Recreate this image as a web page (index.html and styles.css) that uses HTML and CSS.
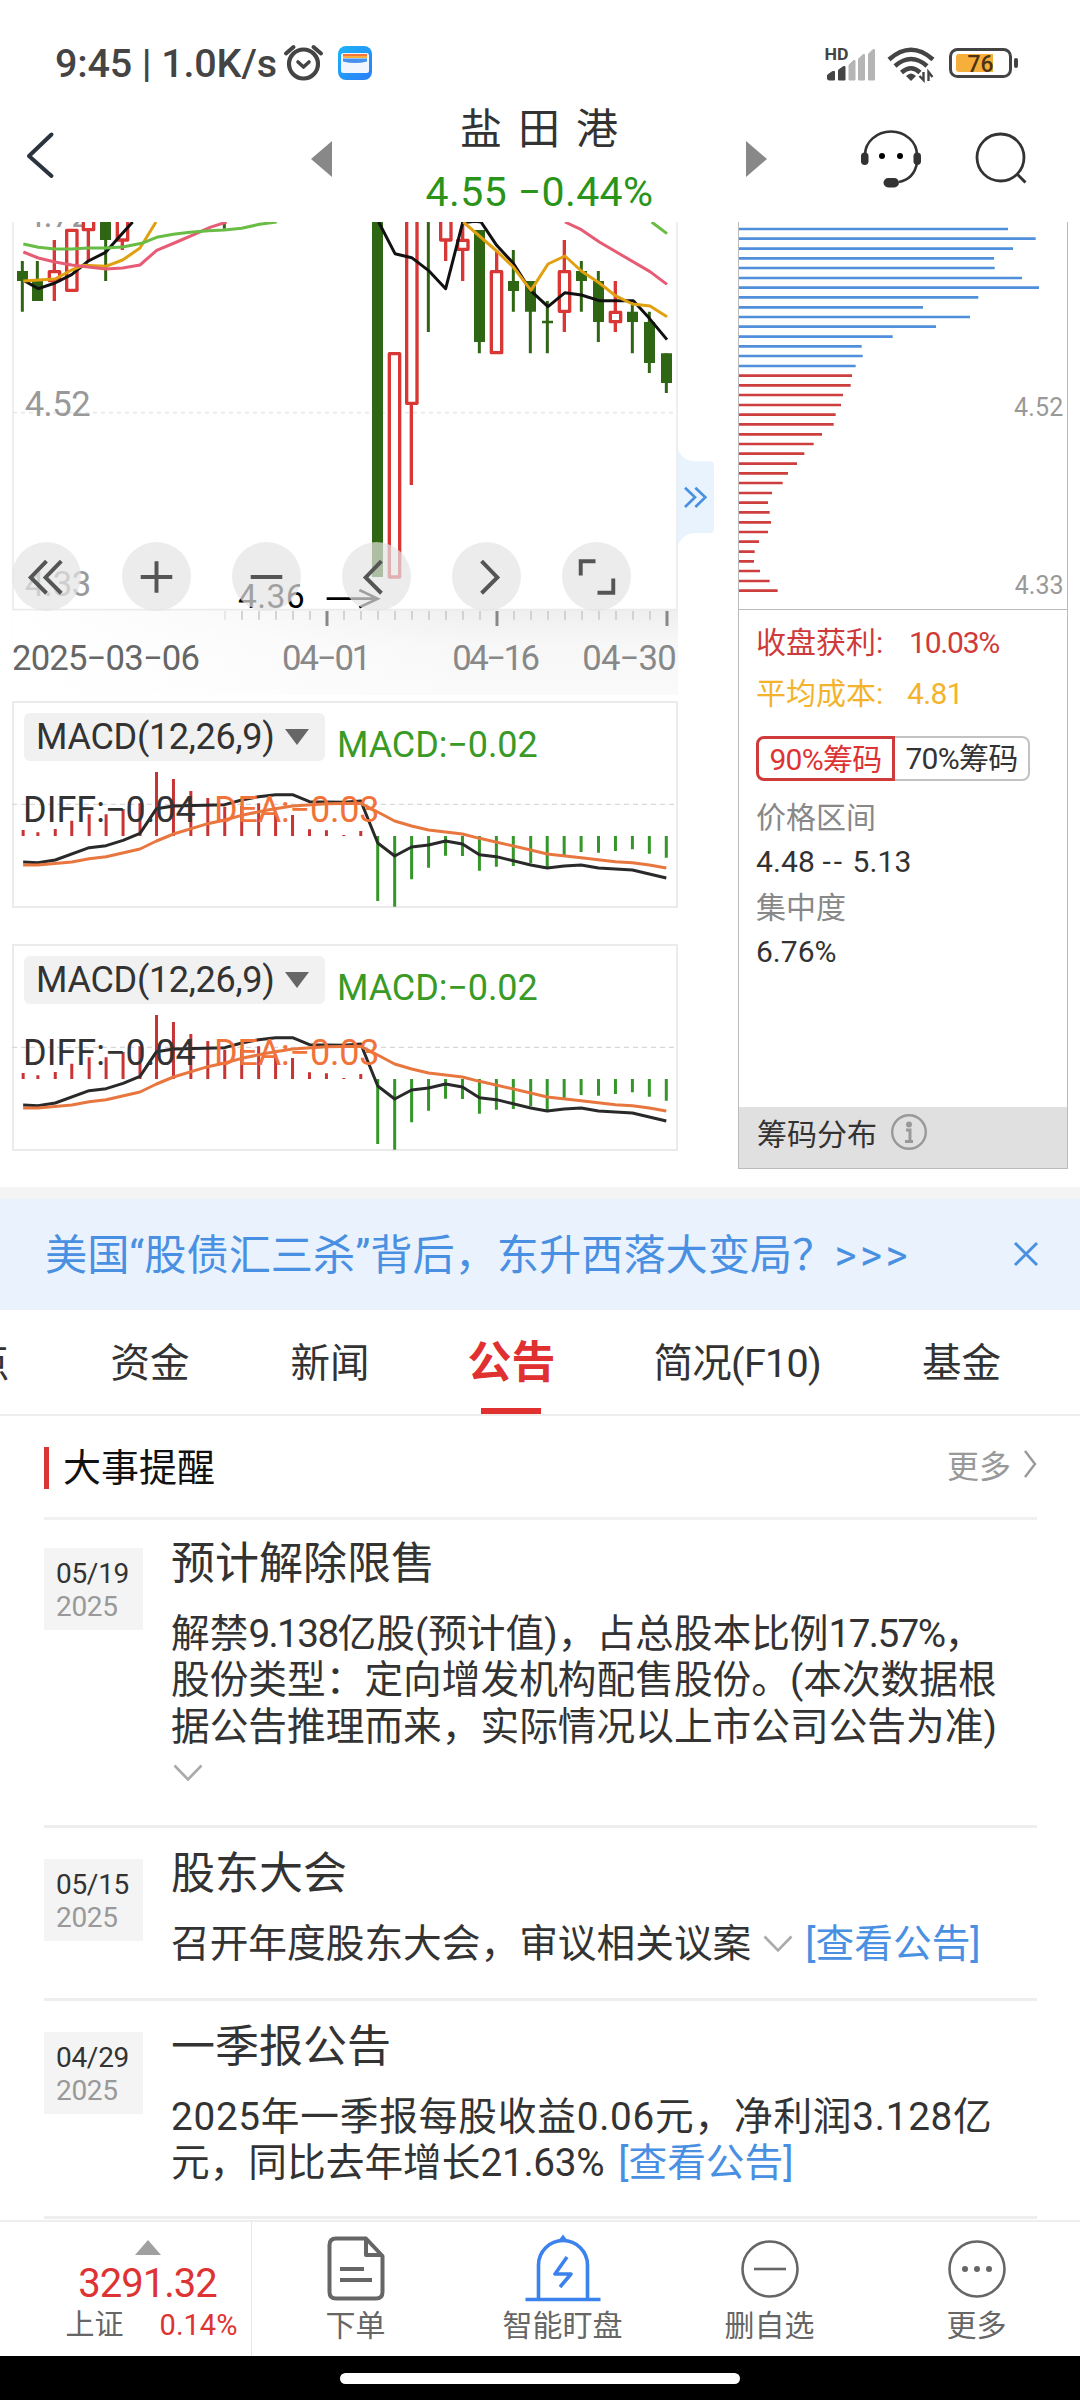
FILE: index.html
```
<!DOCTYPE html>
<html lang="zh-CN">
<head>
<meta charset="utf-8">
<title>盐田港</title>
<link rel="stylesheet" href="styles.css">
</head>
<body>
<header class="status">
  <span class="status-text">9:45 | 1.0K/s</span>
  <svg class="status-left" width="90" height="40" viewBox="283 43 90 40">
    <g fill="none" stroke="#444" stroke-linecap="round" stroke-linejoin="round">
      <circle cx="303.500" cy="64" r="14.500" stroke-width="4.200"/>
      <path d="M286 53.500L293.500 47M321 53.500L313.500 47" stroke-width="4"/>
      <path d="M298 62L303.500 67L309 62" stroke-width="3.600"/>
    </g>
    <defs><linearGradient id="app" x1="0" y1="0" x2="1" y2="1"><stop offset="0" stop-color="#1cb5f5"/><stop offset="1" stop-color="#2b7cf8"/></linearGradient></defs>
    <rect x="338" y="46" width="34" height="34" rx="8" fill="url(#app)"/>
    <rect x="341" y="53" width="28" height="20" rx="2.500" fill="#f1f6fe"/>
    <path d="M343 54h24v3h-24z" fill="#f4763b"/><path d="M343 56h24v2h-24z" fill="#f7b03c"/>
    <path d="M343 58.500h24v3q-12 3-24 0z" fill="#4690f0"/>
  </svg>
  <svg class="status-right" width="200" height="40" viewBox="822 43 200 40">
    <text x="824.500" y="59.500" font-size="16" font-weight="700" textLength="24" lengthAdjust="spacingAndGlyphs" fill="#444" class="label">HD</text>
    <path d="M827.500 79v-4l5-3.500h2V80h-6zM838.500 80V70l5-3.500h1.500V80z" fill="#444" stroke="#444"/>
    <path d="M849 80V65l4.500-4.500h1.500V80zM858.500 80V59l4.500-4.500h1.500V80zM868.500 80V54l4.500-4.500h1.500V80z" fill="#b5b5b5" stroke="#b5b5b5"/>
    <g fill="none" stroke="#444" stroke-width="4.500"><path d="M889 59.500Q911 40 933 59.500"/><path d="M895 66Q911 52 927 66"/><path d="M901.500 72.500Q911 64 920 72.500"/></g>
    <path d="M906 76Q911 71 916 76L911 81z" fill="#444"/>
    <path d="M919.500 76l4 4V72M928.500 81V72l4 5" fill="none" stroke="#444" stroke-width="2.400"/>
    <rect x="950.500" y="49.500" width="60" height="27" rx="7" fill="none" stroke="#444" stroke-width="3"/>
    <rect x="1014" y="58" width="4" height="10" rx="2" fill="#444"/>
    <path d="M959 54h34v18h-34a3 3 0 0 1-3-3v-12a3 3 0 0 1 3-3z" fill="#f6af3b"/>
    <text x="967.500" y="72" font-size="24" font-weight="500" textLength="26" lengthAdjust="spacingAndGlyphs" fill="#4a3414" class="label">76</text>
  </svg>
</header>

<nav class="nav">
  <svg class="back" width="36" height="52" viewBox="22 130 36 52"><path d="M51.500 134.500L29 156L51.500 176" fill="none" stroke="#2b333e" stroke-width="4" stroke-linecap="round" stroke-linejoin="round"/></svg>
  <svg class="tri" width="21" height="36"><path d="M21 0V36L0 18z" fill="#888"/></svg>
  <div class="stock"><div class="stock-name">盐田港</div><div class="stock-price">4.55 <b class="dash">−</b>0.44%</div></div>
  <svg class="tri" width="21" height="36"><path d="M0 0V36L21 18z" fill="#888"/></svg>
  <svg class="service" width="64" height="64" viewBox="859 128 64 64">
    <path d="M865 155a26 23.500 0 0 1 52 0V163q-3 16-18 19" fill="none" stroke="#333" stroke-width="2.600"/>
    <rect x="861" y="152.500" width="7.500" height="12.500" rx="3.700" fill="#333"/><rect x="913.500" y="152.500" width="7.500" height="12.500" rx="3.700" fill="#333"/>
    <circle cx="882" cy="156" r="3"/><circle cx="900" cy="156" r="3"/><rect x="883.500" y="178" width="15.500" height="9.500" rx="4.700" fill="#333"/>
  </svg>
  <svg class="search" width="54" height="54" viewBox="974 131 54 54"><circle cx="1000.500" cy="157.500" r="23.500" fill="none" stroke="#333" stroke-width="2.800"/><path d="M1016.500 173.500L1025.500 182.500" stroke="#333" stroke-width="3"/></svg>
</nav>

<main>
<section class="charts">
  <div class="charts-left">
    <div class="kline">
      <svg class="kline-svg" width="720" height="473" viewBox="0 36 2160 1419">
        <defs>
          <linearGradient id="fadeX"><stop offset="0" stop-color="#fff"/><stop offset=".3" stop-color="#fff" stop-opacity=".7"/><stop offset=".7" stop-color="#fff" stop-opacity="0"/></linearGradient>
          <linearGradient id="fadeY" x2="0" y2="1"><stop offset="0" stop-color="#efefef"/><stop offset=".4" stop-color="#f7f7f7"/><stop offset="1" stop-color="#fafafa"/></linearGradient>
        </defs>
        <rect x="37" y="1200" width="1997" height="255" fill="url(#fadeY)"/>
        <rect x="37" y="1200" width="1997" height="255" fill="url(#fadeX)"/>
        <path d="M39 36V1199H2031V36" fill="none" stroke="#ebebeb" stroke-width="5"/>
        <path d="M39 608H2031" stroke="#e9e9e9" stroke-width="5" stroke-dasharray="12 12"/>
        <g class="label" font-size="104" fill="#999">
          <text x="74" y="50" textLength="198">4.72</text><text x="74" y="617" textLength="198">4.52</text><text x="74" y="1157" textLength="200">4.33</text>
        </g>
        <g class="down">
          <path class="wick" d="M67 153V305M112 153V273M317 36V213M673 36V56M1285 36V366M1438 60V430M1540 120V305M1591 213V430M1642 273V430M1744 153V305M1795 183V396M1897 285V430M1948 305V489M1999 430V549"/>
          <path d="M51 183h33v30h-33zM96 212h33v61h-33zM300 36h33v54h-33zM1116 36h33v1065h-33zM1422 60h33v336h-33zM1524 213h33v30h-33zM1575 213h33v92h-33zM1626 332h33v8h-33zM1728 183h33v30h-33zM1779 213h33v123h-33zM1881 305h33v31h-33zM1932 336h33v123h-33zM1983 430h33v89h-33z"/>
        </g>
        <g class="up">
          <path d="M163 90V183M163 213V273M265 62V153M367 92V120M1234 582V825M1337 92V153M1388 36V90M1388 120V213M1490 120V183M1693 90V183M1693 305V366M1846 213V305M1846 336V366"/>
          <path class="hollow" d="M148 185h31v27h-31zM200 61h31v180h-31zM250 0V59h31V0M352 0V90h31V0M1168 431h31v670h-31zM1220 0V580h31V0M1322 0V90h31V0M1373 91h31v27h-31zM1474 185h31v243h-31zM1678 185h31v119h-31zM1831 307h31v28h-31z"/>
        </g>
        <g fill="none" stroke-width="9" stroke-linejoin="round">
          <path stroke="#111" d="M74 213L115 236L165 219L215 194L265 153L317 127L360 78L398 36M1136 36L1185 131L1235 143L1285 181L1337 236L1388 38L1425 34L1443 36L1490 106L1540 160L1591 241L1644 290L1695 248L1744 255L1798 272H1900L1948 325L2001 389"/>
          <path stroke="#e0a010" d="M70 213L115 210L165 207L215 180L250 166L317 169L368 150L420 114L468 36M1390 36L1490 123L1540 171L1593 241L1644 162L1695 138L1744 183L1798 219L1846 257L1897 282L1950 288L2001 320"/>
          <path stroke="#e65c74" d="M70 126L115 144L165 156L215 165L265 171L317 177L368 174L420 165L470 121L530 96L590 70L630 52L680 36M1695 36L1744 59L1798 96L1950 185L2001 223"/>
          <path stroke="#69bd45" d="M70 102L115 112L165 117L215 117L265 114H317L368 111L425 100L470 82L520 73L570 67L625 62L673 60L725 55L778 43L830 36M1955 36L2001 71"/>
        </g>
        <text class="label" x="714" y="1193" font-size="101" textLength="200" fill="#000">4.36</text>
        <path d="M980 1166H1133M1078 1140L1133 1166L1078 1192" fill="none" stroke="#000" stroke-width="8"/>
        <path d="M675 1203V1229" stroke="#e4e4e4" stroke-width="5"/>
        <path d="M726 1203V1229M777 1203V1229M828 1203V1229M879 1203V1229M930 1203V1229M1032 1203V1229M1083 1203V1229M1134 1203V1229M1185 1203V1229M1236 1203V1229M1287 1203V1229M1338 1203V1229M1389 1203V1229M1440 1203V1229M1542 1203V1229M1593 1203V1229M1644 1203V1229M1695 1203V1229M1746 1203V1229M1797 1203V1229M1848 1203V1229M1899 1203V1229M1950 1203V1229" stroke="#ccc" stroke-width="5"/>
        <path d="M981 1203V1248M1491 1203V1248M2001 1203V1248" stroke="#888" stroke-width="9"/>
        <g class="label" font-size="104" fill="#888">
          <text x="36" y="1380" textLength="564" fill="#666">2025−03−06</text><text x="846" y="1380" textLength="268">04−01</text><text x="1357" y="1380" textLength="263">04−16</text><text x="1747" y="1380" textLength="283">04−30</text>
        </g>
        <path d="M2034 718Q2048 754 2085 754H2130Q2142 754 2142 766V957Q2142 969 2130 969H2085Q2053 969 2034 1003z" fill="#e9f3fe"/>
        <path d="M2055 833L2085 862L2055 891M2086 833L2116 862L2086 891" fill="none" stroke="#4a90e2" stroke-width="8"/>
      </svg>
      <div class="tools">
        <button class="tool"><svg viewBox="-35 -35 70 70"><path d="M0-15.500L-16 1L0 17M15-15.500L-1 1L15 17"/></svg></button>
        <button class="tool"><svg viewBox="-35 -35 70 70"><path d="M-16 .5H16M0-15.500V16.500"/></svg></button>
        <button class="tool"><svg viewBox="-35 -35 70 70"><path d="M-16 .5H16"/></svg></button>
        <button class="tool"><svg viewBox="-35 -35 70 70"><path d="M5-15.500L-11 1L5 17"/></svg></button>
        <button class="tool"><svg viewBox="-35 -35 70 70"><path d="M-5-15.500L11 1L-5 17"/></svg></button>
        <button class="tool"><svg viewBox="-35 -35 70 70"><path d="M-16-1V-15.500H-1M17 2V16.500H1"/></svg></button>
      </div>
    </div>
    <div class="macd">
      <svg class="macd-svg" width="665" height="207" viewBox="27 33 1491 621" preserveAspectRatio="none">
        <g id="macdplot" fill="none">
          <path class="thin" d="M27 343H1518" stroke="#d8d8d8" stroke-dasharray="5 4"/>
          <path stroke="#c83434" d="M52 438V420M85 438V427M124 438V417M161 438V392M200 438V373M238 438V373M276 438V357M314 438V340M351 438V246M389 438V267M428 438V303M466 438V324M504 438V350M542 438V348M580 438V340M618 438V368M656 438V375M694 438V418M732 438V421M771 438V435M809 438V423"/>
          <path stroke="#35962a" d="M847 438V633M885 438V650M923 438V568M961 438V533M999 438V497M1037 438V498M1075 438V542M1113 438V530M1151 438V528M1190 438V520M1227 438V532M1265 438V495M1303 438V486M1342 438V488M1380 438V483M1418 438V478M1456 438V491M1494 438V503"/>
          <path stroke="#292929" d="M52 516L85 518L124 510L200 473L238 467L276 451L314 430L351 356L389 348L504 344L542 330L580 320L618 314H656L694 335L771 337L809 333L847 459L885 498L923 471L961 465L999 453L1037 462L1075 494L1113 500L1190 525L1227 534L1265 528L1303 525L1342 534L1418 540L1494 564"/>
          <path stroke="#e8763f" d="M52 525H85L161 516L200 506L238 500L314 477L351 453L389 432L466 401L504 390L542 376L600 360L656 348L732 341L809 340L847 366L885 393L923 408L961 420L1037 432L1075 445L1190 480L1227 492L1303 503L1380 515L1418 518L1456 525L1494 534"/>
        </g>
      </svg>
      <div class="macd-head"><span class="macd-pill"><span>MACD(12,26,9)</span><i class="caret"></i></span><span class="macd-value">MACD:<b class="dash">−</b>0.02</span></div>
      <div class="macd-sub"><span class="diff">DIFF:<b class="dash">−</b>0.04</span><span class="dea">DEA:<b class="dash">−</b>0.03</span></div>
    </div>
    <div class="macd">
      <svg class="macd-svg" width="665" height="207" viewBox="27 33 1491 621" preserveAspectRatio="none"><use href="#macdplot"/></svg>
      <div class="macd-head"><span class="macd-pill"><span>MACD(12,26,9)</span><i class="caret"></i></span><span class="macd-value">MACD:<b class="dash">−</b>0.02</span></div>
      <div class="macd-sub"><span class="diff">DIFF:<b class="dash">−</b>0.04</span><span class="dea">DEA:<b class="dash">−</b>0.03</span></div>
    </div>
  </div>
  <aside class="chips">
    <svg class="chips-svg" width="328" height="387" viewBox="117 36 984 1161">
      <g stroke-width="8">
        <path stroke="#4f8fdb" d="M117 57H924M117 86H1007M117 116H939M117 145H882M117 174H884M117 204H966M117 233H1017M117 262H835M117 292H669M117 321H810M117 350H708M117 380H578M117 409H485M117 438H488M117 468H467"/>
        <path stroke="#cf3e3e" d="M117 497H456M117 526H452M117 555H429M117 585H423M117 614H407M117 643H401M117 673H366M117 702H341M117 731H313M117 761H291M117 790H264M117 819H248M117 849H216M117 878H204M117 907H209M117 937H213M117 966H204M117 995H177M117 1025H164M117 1054H162M117 1083H180M117 1113H209M117 1142H233"/>
      </g>
      <g class="label" font-size="75" fill="#999"><text x="942" y="618" textLength="148">4.52</text><text x="944" y="1152" textLength="147">4.33</text></g>
    </svg>
    <div class="chips-info">
      <p class="row red"><span>收盘获利:</span><span class="profit">10.03%</span></p>
      <p class="row gold"><span>平均成本:</span><span class="cost">4.81</span></p>
      <div class="segment"><span class="seg on">90%筹码</span><span class="seg">70%筹码</span></div>
      <p class="cap">价格区间</p><p class="val range">4.48 <span class="dashes">--</span> 5.13</p>
      <p class="cap">集中度</p><p class="val">6.76%</p>
    </div>
    <div class="chips-foot"><span>筹码分布</span>
      <svg width="38" height="38" viewBox="-19 -19 38 38"><circle r="16.800" fill="none" stroke="#999" stroke-width="2.400"/><circle cy="-7.500" r="3" fill="#999"/><path d="M-3-2H1V9M-4 9.500H4" stroke="#999" stroke-width="3" fill="none"/></svg>
    </div>
  </aside>
</section>

<section class="promo"><span class="promo-text">美国“股债汇三杀”背后，东升西落大变局？<span class="arrows">&gt;&gt;&gt;</span></span>
  <svg width="26" height="26" viewBox="0 0 26 26"><path d="M2 2L24 24M24 2L2 24" stroke="#4a90e2" stroke-width="3"/></svg></section>

<div class="tabs"><span class="tab">点</span><span class="tab">资金</span><span class="tab">新闻</span><span class="tab active">公告</span><span class="tab brief">简况(F10)</span><span class="tab">基金</span></div>

<section class="events">
  <div class="events-head"><h2>大事提醒</h2><span class="more">更多<svg width="14" height="30" viewBox="0 0 14 30"><path d="M2 2L12 15L2 28" fill="none" stroke="#999" stroke-width="2.400"/></svg></span></div>
  <article class="event first">
    <div class="date"><span>05/19</span><span class="year">2025</span></div>
    <div class="event-main"><h3>预计解除限售</h3>
      <p><span class="line l1">解禁<i class="n">9.138</i>亿股(预计值)，占总股本比例<i class="n">17.57%</i>，</span><span class="line l2">股份类型：定向增发机构配售股份。(本次数据根</span><span class="line l2">据公告推理而来，实际情况以上市公司公告为准)</span><span class="line"><svg class="chev" width="30" height="18" viewBox="0 0 30 18"><path d="M1.500 1.500L15 15.500L28.500 1.500"/></svg></span></p></div>
  </article>
  <article class="event second">
    <div class="date"><span>05/15</span><span class="year">2025</span></div>
    <div class="event-main"><h3>股东大会</h3>
      <p><span class="line">召开年度股东大会，审议相关议案<svg class="chev mid" width="30" height="18" viewBox="0 0 30 18"><path d="M1.500 1.500L15 15.500L28.500 1.500"/></svg><a>[查看公告]</a></span></p></div>
  </article>
  <article class="event third">
    <div class="date"><span>04/29</span><span class="year">2025</span></div>
    <div class="event-main"><h3>一季报公告</h3>
      <p><span class="line l4"><i class="n">2025</i>年一季报每股收益<i class="n">0.06</i>元，净利润<i class="n">3.128</i>亿</span><span class="line">元，同比去年增长<i class="n wide">21.63%</i><a class="tail">[查看公告]</a></span></p></div>
  </article>
</section>
</main>

<footer class="bar">
  <div class="index"><i class="up-tri"></i><strong>3291.32</strong><div class="index-row"><span>上证</span><span class="pct">0.14%</span></div></div>
  <div class="act"><svg width="80" height="70" viewBox="-40 -35 80 70"><g fill="none" stroke="#666" stroke-width="4" stroke-linejoin="round"><path d="M10-30.500H-20Q-26.500-30.500-26.500-24V23Q-26.500 29.500-20 29.500H20Q26.500 29.500 26.500 23V-13L10-30.500V-14H26.500"/><path d="M-16 0H8M-16 11H16"/></g></svg><span>下单</span></div>
  <div class="act"><svg width="80" height="70" viewBox="-40 -35 80 70"><g fill="none" stroke="#3b82ec" stroke-width="3.600"><path d="M-24.500 30V-4A24.500 24.500 0 0 1 24.500-4V30M-37.500 30.500H37.500"/><path d="M4-12L-8 5H8L-3 18" stroke-linejoin="round"/></g><path d="M-5-28L0-34.500L5-28z" fill="#3b82ec"/></svg><span>智能盯盘</span></div>
  <div class="act"><svg width="80" height="70" viewBox="-40 -35 80 70"><circle r="27.500" fill="none" stroke="#666" stroke-width="2.600"/><path d="M-16 0H16" stroke="#666" stroke-width="2.600"/></svg><span>删自选</span></div>
  <div class="act"><svg width="80" height="70" viewBox="-40 -35 80 70"><circle r="27.500" fill="none" stroke="#666" stroke-width="2.600"/><g fill="#666"><circle cx="-12" r="3"/><circle r="3"/><circle cx="12" r="3"/></g></svg><span>更多</span></div>
</footer>
<div class="home"><i></i></div>
</body>
</html>
```
FILE: styles.css
```
* { box-sizing: border-box; margin: 0; padding: 0; }
body { width: 1080px; height: 2400px; overflow: hidden; background: #fff; color: #333; display: flex; flex-direction: column; font-family: Roboto, "Noto Sans CJK SC", sans-serif; font-size: 30px; }
svg { display: block; flex: none; }
i { font-style: normal; }
.label { font-family: Roboto, "Noto Sans CJK SC", sans-serif; }
.dash { font-weight: inherit; }

.status { height: 100px; flex: none; display: flex; align-items: flex-start; padding: 43px 58px 0 55px; }
.status-text { width: 228px; font-size: 39.500px; font-weight: 500; line-height: 41px; letter-spacing: -.15px; color: #444; white-space: pre; }
.status-right { margin-left: auto; }

.nav { height: 122px; flex: none; display: grid; grid-template-columns: 311px 21px 414px 21px 92px 64px 51px 54px; }
.back { margin: 30px 0 0 22px; }
.tri { margin-top: 41px; }
.service { grid-column: 6; margin-top: 28px; }
.search { grid-column: 8; margin-top: 31px; }
.stock { text-align: center; white-space: nowrap; padding-top: 2px; }
.stock-name { font-size: 42px; line-height: 56px; letter-spacing: 16px; padding-left: 16px; }
.stock-price { font-size: 41px; line-height: 60px; letter-spacing: .4px; color: #2a941a; margin-top: 4px; padding-left: 1px; }

.charts { height: 965px; display: flex; align-items: flex-start; }
.charts-left { width: 720px; flex: none; }
.kline { position: relative; height: 473px; }
.down { fill: #2f6613; stroke: none; }
.down .wick { stroke: #2f6613; stroke-width: 9; }
.up { fill: none; stroke: #d93636; stroke-width: 10; }
.hollow { fill: #fff; stroke-linejoin: round; }
.tools { position: absolute; left: 12px; top: 320px; display: flex; gap: 41px; }
.tool { width: 69px; height: 69px; border: 0; border-radius: 50%; background: rgba(228, 228, 228, .7); }
.tool svg { width: 69px; height: 69px; fill: none; stroke: #555; stroke-width: 4; }
.macd { position: relative; width: 666px; height: 207px; margin: 6px 0 36px 12px; border: 2px solid #ebebeb; padding: 10px 0 0 10px; color: #333; font-size: 36px; white-space: nowrap; }
.macd-svg { position: absolute; left: -2px; top: -2px; }
.macd-svg path { vector-effect: non-scaling-stroke; stroke-width: 3; stroke-linejoin: round; }
.macd-svg .thin { stroke-width: 1.3; }
.macd-head, .macd-sub { position: relative; display: flex; }
.macd-pill { width: 301px; height: 48px; line-height: 50px; background: #f1f1f1; border-radius: 6px; padding: 0 16px 0 12px; display: flex; align-items: center; justify-content: space-between; letter-spacing: -.3px; }
.caret { border: 12px solid transparent; border-top: 16px solid #666; border-bottom: 0; }
.macd-value { margin-left: 12px; line-height: 64px; color: #3a9a26; letter-spacing: -.1px; }
.macd-sub { line-height: 42px; margin-top: 12px; }
.diff { margin-left: -1px; width: 191px; }
.dea { color: #f1733a; letter-spacing: -.2px; }

.chips { margin-left: 18px; width: 330px; height: 947px; border: 1px solid #bbb; border-top: 0; display: flex; flex-direction: column; white-space: nowrap; }
.chips-info { border-top: 1px solid #bbb; flex: 1; padding-left: 17px; }
.row { display: flex; line-height: 50px; height: 51px; }
.row:first-child { margin-top: 8px; }
.row span:first-child { width: 153px; }
.red { color: #cf3a3a; } .gold { color: #f3b32c; }
.cost { margin-left: -2px; }
.profit { letter-spacing: -1.2px; } .cost { letter-spacing: -.6px; }
.segment { display: flex; width: 274px; height: 45px; margin-top: 16px; }
.seg { flex: 1; border: 2.500px solid #c2c2c2; border-left: 0; border-radius: 0 8px 8px 0; text-align: center; line-height: 41px; letter-spacing: -.7px; }
.seg.on { color: #d33; border: 3px solid #cf3a3a; border-radius: 8px 0 0 8px; }
.cap { color: #888; line-height: 46px; height: 46px; margin-top: 14px; }
.val { line-height: 44px; height: 44px; margin-top: -1px; }
.val + .cap { margin-top: 1px; }
.range { letter-spacing: .1px; }
.dashes { letter-spacing: 3px; }
.chips-foot { height: 61px; background: #e0e0e0; display: flex; align-items: center; padding: 0 0 12px 18px; gap: 13px; }

.promo { height: 123px; border-top: 12px solid #f4f4f4; background: #eaf3fd; display: flex; align-items: center; justify-content: space-between; padding: 0 41px 2px 45px; color: #4a90e2; font-size: 42.200px; white-space: nowrap; }
.promo-text { padding-bottom: 4px; }
.arrows { letter-spacing: 3.500px; }
.tabs { height: 106px; border-bottom: 2px solid #eee; display: flex; gap: 101px; font-size: 39.500px; line-height: 107px; white-space: nowrap; overflow: hidden; }
.tab:first-child { margin-left: -30px; }
.tab.active { position: relative; color: #e03030; font-size: 44px; font-weight: 700; margin: 0 -3px; line-height: 106px; }
.tab.active::after { content: ""; position: absolute; left: 13px; bottom: 0; width: 60px; height: 6px; background: #e03030; }
.brief { letter-spacing: -.7px; }

.events { padding: 0 43px 0 44px; }
.events-head { height: 104px; border-bottom: 3px solid #f1f1f1; display: flex; align-items: center; justify-content: space-between; }
.events-head h2 { color: #111; font-size: 38px; font-weight: 400; line-height: 41px; border-left: 5px solid #d93636; padding-left: 14px; padding-top: 1px; margin-top: 2px; }
.more { color: #999; font-size: 32px; display: flex; align-items: center; gap: 12px; margin-top: -5px; }
.event { display: flex; border-bottom: 3px solid #eee; }
.first { height: 308px; } .second { height: 173px; } .third { height: 218px; }
.date { width: 99px; height: 82px; margin-top: 28px; background: #f4f4f4; padding: 9px 0 0 12px; font-size: 28px; line-height: 33px; letter-spacing: -.3px; display: flex; flex-direction: column; flex: none; }
.second .date, .third .date { margin-top: 31px; }
.year { color: #999; }
.event-main { margin-left: 28px; }
.event-main h3 { font-size: 44px; font-weight: 400; line-height: 56px; margin-top: 16px; }
.second h3, .third h3 { margin-top: 18px; }
.event-main p { margin-top: 18.500px; font-size: 38.700px; }
.line { display: flex; align-items: center; line-height: 46.500px; height: 46.500px; white-space: nowrap; }
.n { letter-spacing: -1.600px; }
.n.wide { letter-spacing: -.3px; }
.l4 { letter-spacing: .8px; }
.l4 .n { letter-spacing: .7px; }
.chev { margin-left: 2px; fill: none; stroke: #aaa; stroke-width: 2.600; }
.chev.mid { margin: 0 12px 0 12px; }
a { color: #4a90e2; }
.tail { margin-left: 14px; }

.bar { position: absolute; left: 0; top: 2220px; width: 1080px; height: 136px; background: #fff; border-top: 2px solid #eee; display: grid; grid-template-columns: 252px 207px 207px 207px 207px; color: #666; white-space: nowrap; }
.index { border-right: 1px solid #e8e8e8; display: flex; flex-direction: column; align-items: center; padding: 18px 0 0 44px; }
.up-tri { border: 13.500px solid transparent; border-bottom: 15px solid #a0a0a0; border-top: 0; }
.index strong { color: #d33; font-size: 40px; line-height: 46px; font-weight: 400; margin-top: 6px; letter-spacing: -1px; }
.index-row { font-size: 29px; line-height: 34px; display: flex; gap: 36px; margin: 1px 0 0 8px; }
.pct { color: #d33; }
.act { display: flex; flex-direction: column; align-items: center; padding-top: 12px; line-height: 44px; }
.home { position: absolute; left: 0; top: 2356px; width: 1080px; height: 44px; background: #000; display: flex; justify-content: center; padding-top: 17px; }
.home i { width: 400px; height: 11px; border-radius: 6px; background: #fff; }
```
